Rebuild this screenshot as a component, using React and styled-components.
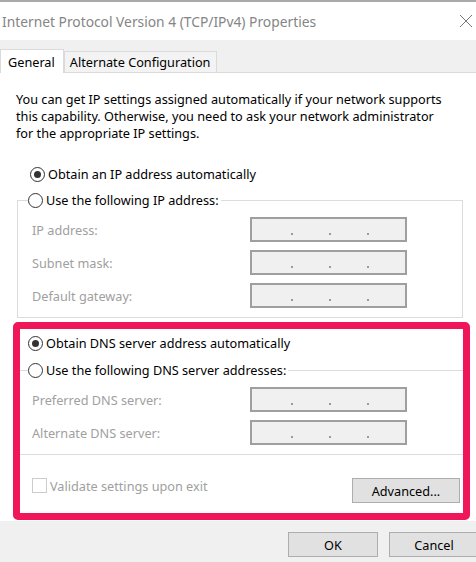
import React from 'react'
import styled, { createGlobalStyle } from "styled-components"

const GlobalStyle = createGlobalStyle`
  html, body {
    margin: 0;
    padding: 0;
    background: #ffffff;
  }
  body {
    font-family: "Noto Sans", "Open Sans", sans-serif;
    font-size: 12.7px;
    color: #000;
  }
`;

const Window = styled.div`
  width: 476px;
  height: 562px;
  overflow: hidden;
  display: flex;
  flex-direction: column;
  border-top: 2px solid #a9a9a9;
  box-sizing: border-box;
`;

const TitleBar = styled.div`
  height: 38px;
  display: flex;
  align-items: center;
  justify-content: space-between;
  padding: 0 3px 0 2px;
`;

const Title = styled.span`
  font-size: 13.8px;
  color: #858585;
`;

const CloseButton = styled.div`
  width: 14px;
  height: 14px;
  display: flex;
  margin-bottom: 1px;
`;

const TabStrip = styled.div`
  height: 33px;
  background: #f0f0f0;
  display: flex;
  align-items: flex-end;
  box-sizing: border-box;
  border-bottom: 1px solid #dadada;
`;

const Tab = styled.div`
  height: ${p => (p.$active ? "24px" : "21px")};
  padding: 0 ${p => (p.$active ? "8px" : "6px")} 0 ${p => (p.$active ? "7px" : "5px")};
  background: ${p => (p.$active ? "#ffffff" : "#f3f3f3")};
  border: 1px solid #dadada;
  border-bottom: none;
  margin-bottom: ${p => (p.$active ? "-1px" : "0")};
  display: flex;
  align-items: center;
  box-sizing: border-box;
`;

const Content = styled.div`
  flex: 1;
  display: flex;
  flex-direction: column;
`;

const Description = styled.p`
  margin: 18px 0 0 16px;
  width: 432px;
  line-height: 17px;
`;

const RadioRow = styled.label`
  display: flex;
  align-items: center;
  gap: 3px;
  height: 22px;
  margin: ${p => p.$margin || "0"};
  white-space: nowrap;
`;

const RadioCircle = styled.span`
  width: 13px;
  height: 13px;
  border: 1px solid #333;
  border-radius: 50%;
  background: #fff;
  display: flex;
  align-items: center;
  justify-content: center;
  flex-shrink: 0;

  &::after {
    content: "";
    width: 7px;
    height: 7px;
    border-radius: 50%;
    background: ${p => (p.$checked ? "#333" : "transparent")};
  }
`;

const GroupBox = styled.fieldset`
  margin: ${p => p.$margin || "0"};
  padding: 6px 0 9px ${p => (p.$open ? "12px" : "14px")};
  border: 1px solid #dcdcdc;
  border-left: ${p => (p.$open ? "none" : "1px solid #dcdcdc")};
  border-right: ${p => (p.$open ? "none" : "1px solid #dcdcdc")};
  display: flex;
  flex-direction: column;
  gap: 8px;
  min-width: 0;
`;

const Legend = styled.legend`
  padding: 0 2px 0 0;
  margin-left: ${p => p.$indent || "0"};
`;

const FieldRow = styled.div`
  display: flex;
  align-items: center;
  height: 25px;
`;

const FieldLabel = styled.span`
  width: 218px;
  color: #a0a0a0;
`;

const IpBox = styled.div`
  width: 157px;
  height: 25px;
  box-sizing: border-box;
  background: #f0f0f0;
  border: 2px solid #9f9f9f;
  display: flex;
  align-items: flex-end;
  padding: 0 0 5px 39px;
  gap: 36px;
`;

const Dot = styled.span`
  width: 2px;
  height: 2px;
  background: #9a9a9a;
`;

const Highlight = styled.section`
  margin: 4px 6px 1px 13px;
  border: 7px solid #ef1659;
  border-radius: 5px;
  padding: 3px 0 0 0;
`;

const BottomRow = styled.div`
  display: flex;
  justify-content: space-between;
  align-items: flex-start;
  padding: 22px 3px 10px 12px;
`;

const CheckRow = styled.label`
  display: flex;
  align-items: center;
  gap: 3px;
  color: #a0a0a0;
  height: 17px;
`;

const CheckBox = styled.span`
  width: 13px;
  height: 13px;
  border: 1px solid #cccccc;
  background: #fff;
`;

const Button = styled.button`
  width: ${p => p.$width || "90px"};
  height: 25px;
  margin-top: ${p => p.$offset || "0"};
  background: #e1e1e1;
  border: 1px solid #adadad;
  font-family: inherit;
  font-size: 12.7px;
  color: #000;
  padding: 0;
  cursor: default;
`;

const Footer = styled.div`
  flex: 1;
  background: #f0f0f0;
  display: flex;
  justify-content: flex-end;
  align-items: flex-start;
  gap: 11px;
  padding-top: 11px;
  margin-right: -3px;
`;

const IpField = () => (
  <IpBox>
    <Dot />
    <Dot />
    <Dot />
  </IpBox>
);

const Radio = ({ checked, children, margin }) => (
  <RadioRow $margin={margin}>
    <RadioCircle $checked={checked} />
    {children}
  </RadioRow>
);

export default function App() {
  return (
    <>
      <GlobalStyle />
      <Window>
        <TitleBar>
          <Title>Internet Protocol Version 4 (TCP/IPv4) Properties</Title>
          <CloseButton>
            <svg width="14" height="14" viewBox="0 0 14 14">
              <path d="M1 1 L13 13 M13 1 L1 13" stroke="#777" strokeWidth="1" fill="none" />
            </svg>
          </CloseButton>
        </TitleBar>

        <TabStrip>
          <Tab $active>General</Tab>
          <Tab>Alternate Configuration</Tab>
        </TabStrip>

        <Content>
          <Description>
            You can get IP settings assigned automatically if your network supports
            this capability. Otherwise, you need to ask your network administrator
            for the appropriate IP settings.
          </Description>

          <Radio checked margin="21px 0 0 30px">Obtain an IP address automatically</Radio>

          <GroupBox $margin="4px 13px 0 17px">
            <Legend $indent="-4px">
              <Radio>Use the following IP address:</Radio>
            </Legend>
            <FieldRow>
              <FieldLabel>IP address:</FieldLabel>
              <IpField />
            </FieldRow>
            <FieldRow>
              <FieldLabel>Subnet mask:</FieldLabel>
              <IpField />
            </FieldRow>
            <FieldRow>
              <FieldLabel>Default gateway:</FieldLabel>
              <IpField />
            </FieldRow>
          </GroupBox>

          <Highlight>
            <Radio checked margin="0 0 0 8px">Obtain DNS server address automatically</Radio>
            <GroupBox $open $margin="5px 0 0 0">
              <Legend $indent="-4px">
                <Radio>Use the following DNS server addresses:</Radio>
              </Legend>
              <FieldRow>
                <FieldLabel>Preferred DNS server:</FieldLabel>
                <IpField />
              </FieldRow>
              <FieldRow>
                <FieldLabel>Alternate DNS server:</FieldLabel>
                <IpField />
              </FieldRow>
            </GroupBox>
            <BottomRow>
              <CheckRow>
                <CheckBox />
                Validate settings upon exit
              </CheckRow>
              <Button $width="108px" $offset="1px">Advanced...</Button>
            </BottomRow>
          </Highlight>

          <Footer>
            <Button>OK</Button>
            <Button>Cancel</Button>
          </Footer>
        </Content>
      </Window>
    </>
  )
}
